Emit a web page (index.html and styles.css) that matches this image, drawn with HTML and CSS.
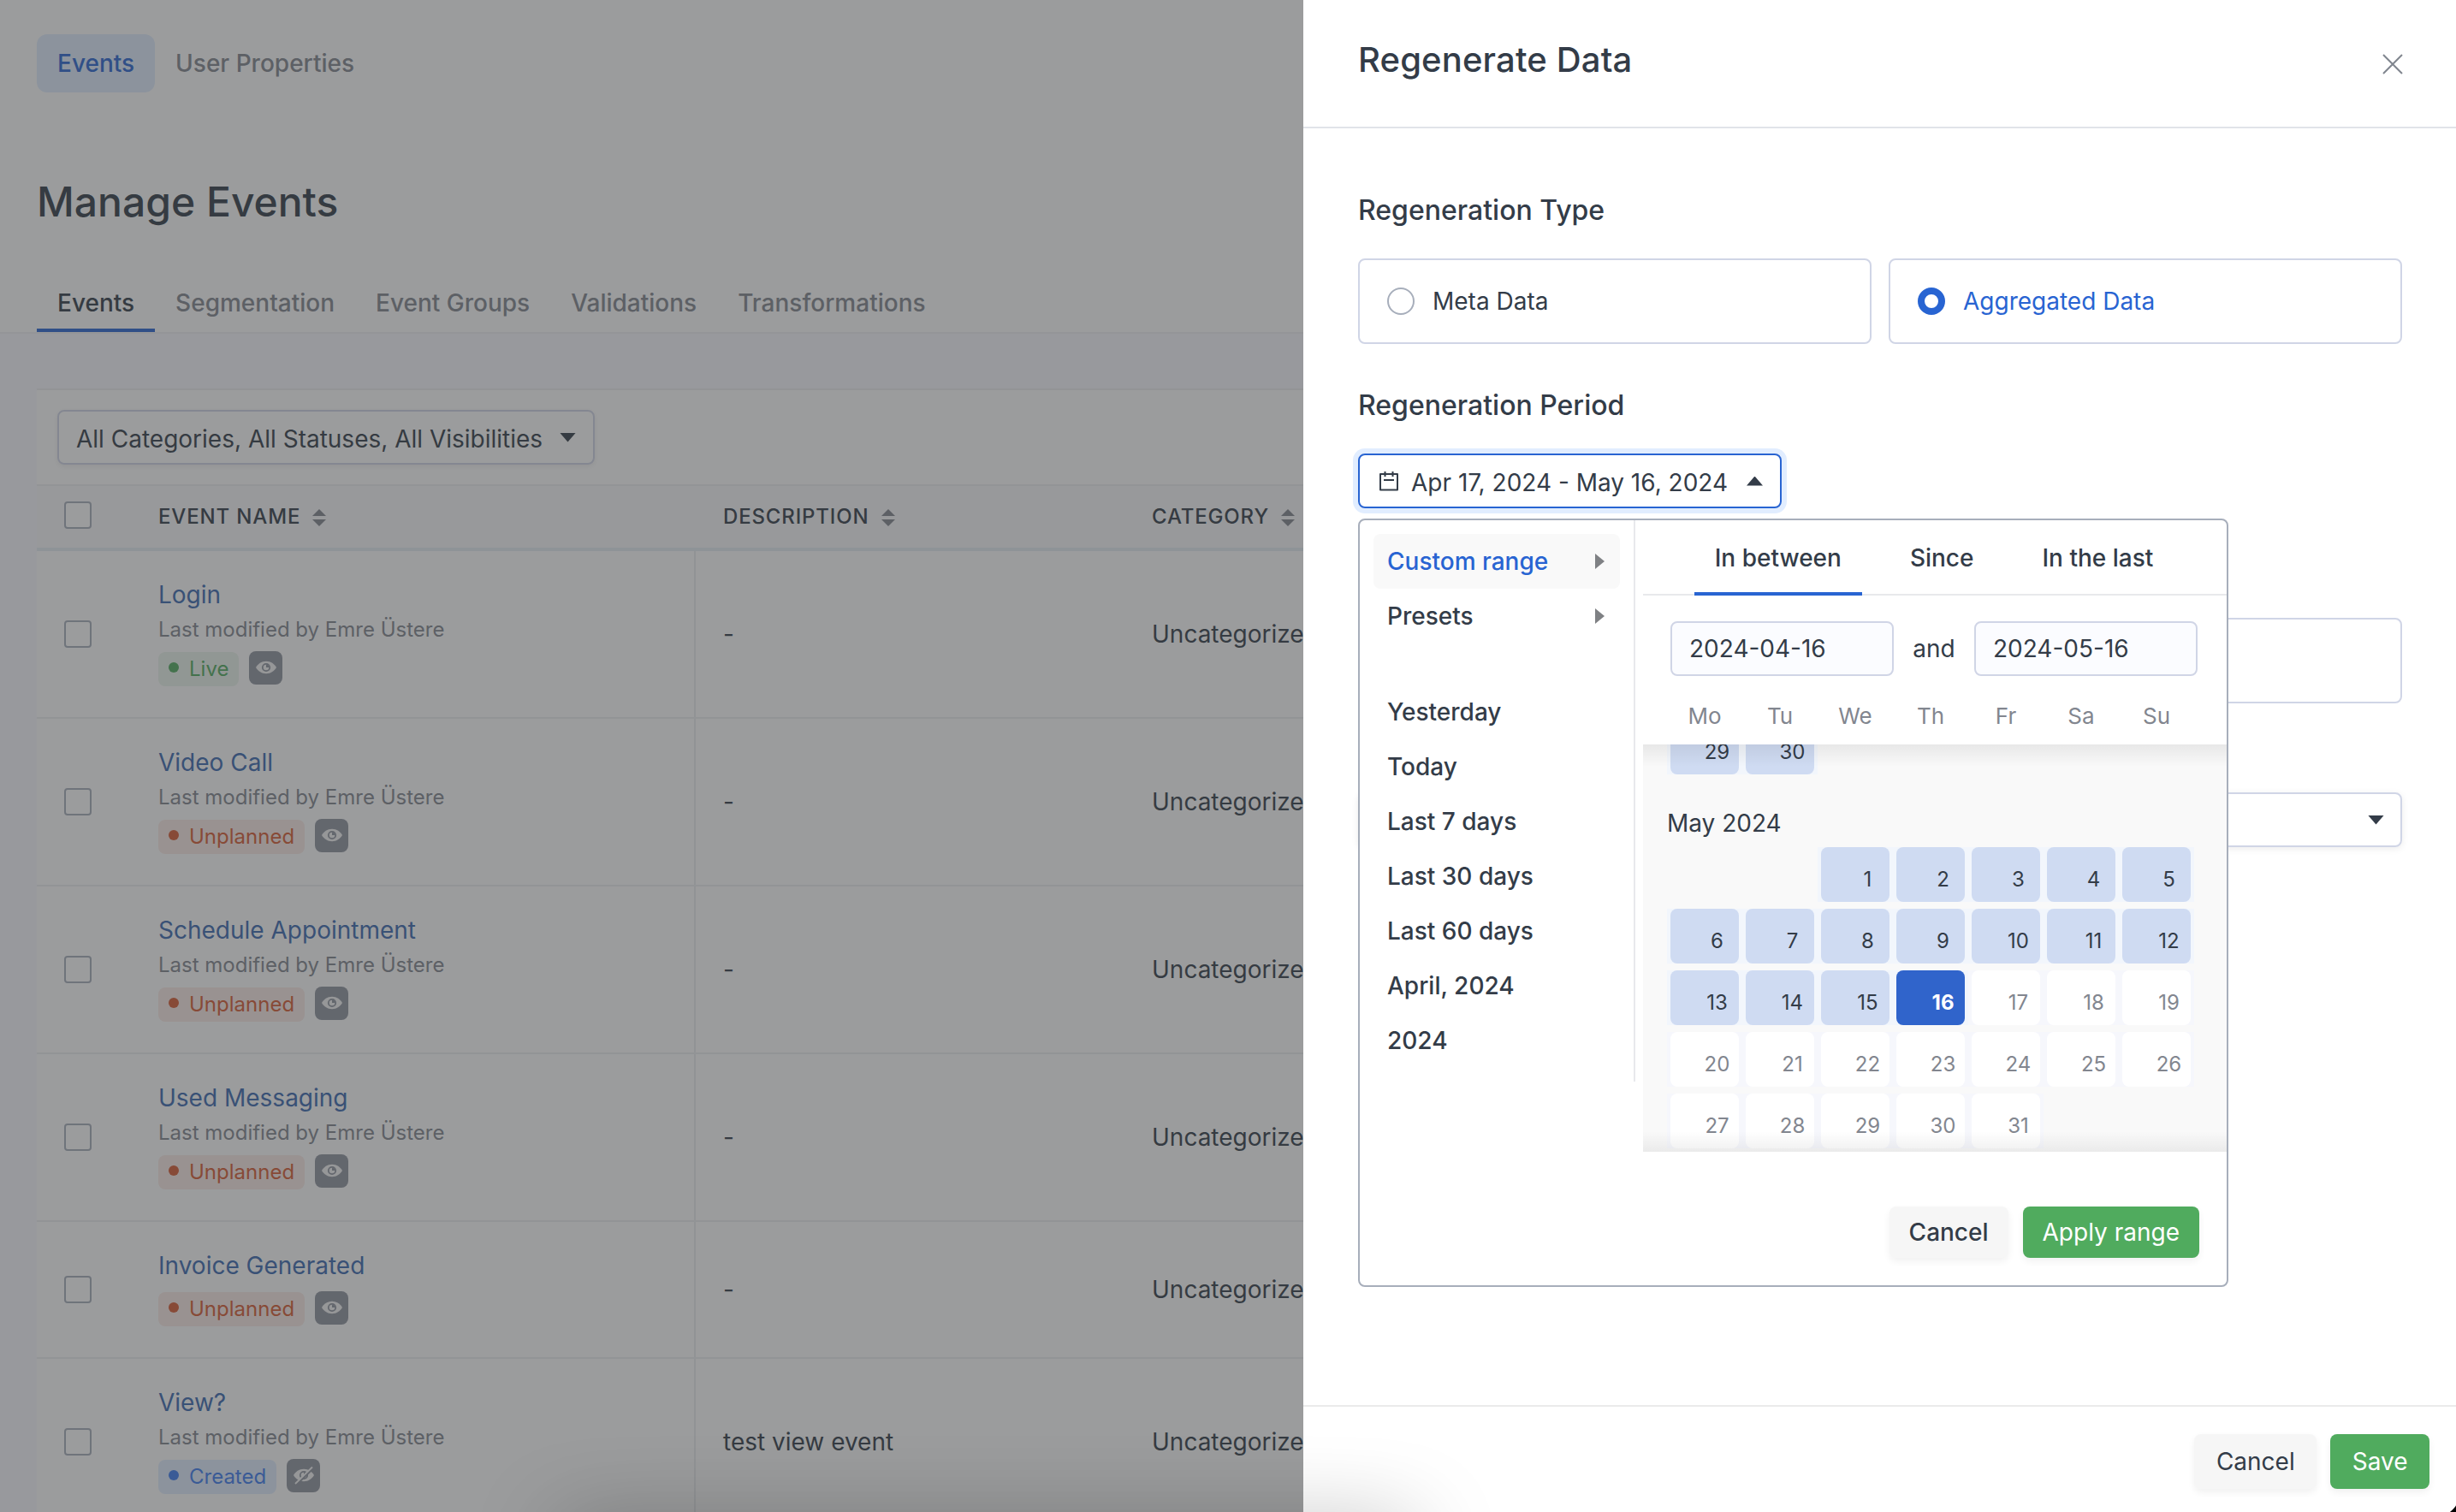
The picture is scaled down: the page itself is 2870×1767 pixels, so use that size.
FILE: index.html
```html
<!DOCTYPE html>
<html lang="en">
<head>
	<meta charset="utf-8">
	<title>Manage Events</title>
	<meta name="viewport" content="width=device-width, initial-scale=1">
	<link rel="stylesheet" href="styles.css">
</head>
<body>
	<svg class="defs" width="0" height="0">
		<symbol id="eye" viewBox="0 0 24 20">
			<path d="M12 2.800C6.500 2.800 2.200 6 0 10c2.200 4 6.500 7.200 12 7.200s9.800-3.200 12-7.200C21.800 6 17.500 2.800 12 2.800z" fill="currentColor"/>
			<circle cx="12" cy="10" r="4.200" fill="none" stroke="#8f949f" stroke-width="1.800"/>
			<path d="M12 6.500a3.500 3.500 0 0 1 3.500 3.500H12z" fill="#8f949f"/>
		</symbol>
		<symbol id="sort" viewBox="0 0 16 20">
			<path d="M8 0l8 8H0zM0 12h16l-8 8z" fill="currentColor"/>
		</symbol>
	</svg>

	<div class="page">
		<div class="top">
			<div class="pills">
				<span class="pill active">Events</span>
				<span class="pill">User Properties</span>
			</div>
			<h1>Manage Events</h1>
			<div class="tabs">
				<span class="tab active">Events</span>
				<span class="tab">Segmentation</span>
				<span class="tab">Event Groups</span>
				<span class="tab">Validations</span>
				<span class="tab">Transformations</span>
			</div>
		</div>

		<div class="card">
			<div class="filters">
				<div class="filter"><span>All Categories, All Statuses, All Visibilities</span><i class="caret"></i></div>
			</div>
			<div class="row head">
				<i class="check"></i>
				<div class="name"><span>EVENT NAME</span><svg class="sort"><use href="#sort"/></svg></div>
				<div class="desc"><span>DESCRIPTION</span><svg class="sort"><use href="#sort"/></svg></div>
				<div class="cat"><span>CATEGORY</span><svg class="sort"><use href="#sort"/></svg></div>
			</div>
			<div class="row">
				<i class="check"></i>
				<div class="name">
					<a>Login</a>
					<small>Last modified by Emre Üstere</small>
					<div class="badges"><span class="badge live">Live</span><span class="eye"><svg><use href="#eye"/></svg></span></div>
				</div>
				<div class="desc">-</div>
				<div class="cat">Uncategorized</div>
			</div>
			<div class="row">
				<i class="check"></i>
				<div class="name">
					<a>Video Call</a>
					<small>Last modified by Emre Üstere</small>
					<div class="badges"><span class="badge unplanned">Unplanned</span><span class="eye"><svg><use href="#eye"/></svg></span></div>
				</div>
				<div class="desc">-</div>
				<div class="cat">Uncategorized</div>
			</div>
			<div class="row">
				<i class="check"></i>
				<div class="name">
					<a>Schedule Appointment</a>
					<small>Last modified by Emre Üstere</small>
					<div class="badges"><span class="badge unplanned">Unplanned</span><span class="eye"><svg><use href="#eye"/></svg></span></div>
				</div>
				<div class="desc">-</div>
				<div class="cat">Uncategorized</div>
			</div>
			<div class="row">
				<i class="check"></i>
				<div class="name">
					<a>Used Messaging</a>
					<small>Last modified by Emre Üstere</small>
					<div class="badges"><span class="badge unplanned">Unplanned</span><span class="eye"><svg><use href="#eye"/></svg></span></div>
				</div>
				<div class="desc">-</div>
				<div class="cat">Uncategorized</div>
			</div>
			<div class="row">
				<i class="check"></i>
				<div class="name">
					<a>Invoice Generated</a>
					<div class="badges"><span class="badge unplanned">Unplanned</span><span class="eye"><svg><use href="#eye"/></svg></span></div>
				</div>
				<div class="desc">-</div>
				<div class="cat">Uncategorized</div>
			</div>
			<div class="row">
				<i class="check"></i>
				<div class="name">
					<a>View?</a>
					<small>Last modified by Emre Üstere</small>
					<div class="badges"><span class="badge created">Created</span><span class="eye"><svg viewBox="0 0 24 20"><use href="#eye" width="24" height="20"/><path d="M3.500 21L23 2" stroke="#8f949f" stroke-width="2.400"/><path d="M2 20L22 .5" stroke="currentColor" stroke-width="1.800"/></svg></span></div>
				</div>
				<div class="desc">test view event</div>
				<div class="cat">Uncategorized</div>
			</div>
		</div>
	</div>

	<div class="overlay"></div>

	<div class="drawer">
		<div class="drawer-head">
			<h2>Regenerate Data</h2>
			<svg class="close" viewBox="0 0 24 24"><path d="M1 1l22 22M23 1L1 23" stroke="#81868f" stroke-width="2"/></svg>
		</div>
		<div class="drawer-body">
			<h3>Regeneration Type</h3>
			<div class="radios">
				<label class="radio"><i></i>Meta Data</label>
				<label class="radio on"><i></i>Aggregated Data</label>
			</div>
			<h3>Regeneration Period</h3>
			<div class="period">
				<div class="date-btn">
					<svg class="cal" viewBox="0 0 24 24"><path d="M2 4h20v18.500H2zM7.500 1v6M16.500 1v6M6 11h12" fill="none" stroke="#333c48" stroke-width="2" stroke-linejoin="round"/></svg>
					<span>Apr 17, 2024 - May 16, 2024</span>
					<i class="caret up"></i>
				</div>
				<div class="picker">
					<div class="picker-main">
						<div class="shortcuts">
							<div class="item sel">Custom range<i class="arrow"></i></div>
							<div class="item">Presets<i class="arrow"></i></div>
							<div class="item first">Yesterday</div>
							<div class="item">Today</div>
							<div class="item">Last 7 days</div>
							<div class="item">Last 30 days</div>
							<div class="item">Last 60 days</div>
							<div class="item">April, 2024</div>
							<div class="item">2024</div>
						</div>
						<div class="range">
							<div class="range-tabs"><span class="active">In between</span><span>Since</span><span>In the last</span></div>
							<div class="inputs"><div class="input">2024-04-16</div><span>and</span><div class="input">2024-05-16</div></div>
							<div class="week"><span>Mo</span><span>Tu</span><span>We</span><span>Th</span><span>Fr</span><span>Sa</span><span>Su</span></div>
							<div class="scroll">
								<div class="days april" id="april"></div>
								<div class="month">May 2024</div>
								<div class="days" id="may"></div>
							</div>
						</div>
					</div>
					<div class="picker-foot">
						<span class="btn strong">Cancel</span>
						<span class="btn green">Apply range</span>
					</div>
				</div>
			</div>
			<div class="box"></div>
			<div class="select"><i class="caret"></i></div>
		</div>
		<div class="drawer-foot">
			<span class="btn">Cancel</span>
			<span class="btn green">Save</span>
		</div>
	</div>
	<div class="bottom-shadow"></div>
	<div class="corner"></div>

	<script>
	// offset = empty cells before the first day
	function fill(id, from, to, offset, today) {
		var box = document.getElementById(id);
		for (var d = from; d <= to; d++) {
			var cell = document.createElement("div");
			cell.className = "day";
			if (id == "april" || d < today) cell.className += " in";
			else if (d == today) cell.className += " in today";
			if (d == from) cell.style.gridColumnStart = offset + 1;
			cell.innerHTML = "<span>" + d + "</span>";
			box.appendChild(cell);
		}
	}
	fill("april", 29, 30, 0, 0);
	fill("may", 1, 31, 2, 16);
	</script>
</body>
</html>
```
FILE: styles.css
```css
*{ margin:0; padding:0; box-sizing:border-box; }
body{ width:2870px; height:1767px; overflow:hidden; position:relative; font-family:Inter,"Liberation Sans",sans-serif; font-size:28px; line-height:40px; color:#333c48; background:#fff; }
i{ font-style:normal; }
.defs{ position:absolute; }

/* page */
.page{ height:1767px; background:#f8f9ff; overflow:hidden; }
.top{ height:390px; background:#fff; border-bottom:2px solid #f0f1f4; padding:40px 0 0 43px; }
.pills{ display:flex; height:68px; }
.pill{ padding:0 24px; line-height:69px; border-radius:12px; color:#82868f; font-weight:500; }
.pill.active{ background:#e1edff; color:#2864d2; }
h1{ font-size:48px; line-height:60px; font-weight:500; margin-top:98px; }
.tabs{ display:flex; height:70px; margin-top:52px; }
.tab{ padding:0 24px; line-height:72px; height:70px; color:#82868f; font-weight:500; }
.tab.active{ color:#333c48; border-bottom:4px solid #2864d2; }

.card{ margin:64px 0 0 43px; background:#fff; border-top:2px solid #eeeff1; }
.filters{ height:110px; padding:23px 0 0 24px; }
.filter{ display:inline-flex; align-items:center; justify-content:space-between; width:628px; height:64px; padding:0 20px; border:2px solid #d0d5e6; border-radius:8px; box-shadow:0 2px 6px rgba(0,0,0,.08); }
.filter span{ white-space:nowrap; padding-top:3px; }
.caret{ width:19px; height:11px; background:#333c48; clip-path:polygon(0 0,100% 0,50% 100%); }
.caret.up{ clip-path:polygon(0 100%,100% 100%,50% 0); }

.row{ display:flex; align-items:center; border-bottom:2px solid #edeef0; }
.row.head{ height:78px; border-top:2px solid #edeef0; border-bottom:4px solid #e5edf2; background:#f9f9fa; font-size:24px; font-weight:500; letter-spacing:.85px; }
.row.head > div{ display:flex; align-items:center; gap:14px; padding-top:0; padding-bottom:0; border:0; }
.row.head .check{ margin-bottom:4px; }
.sort{ width:16px; height:20px; color:#82868f; margin-top:2px; }
.check{ flex:none; width:32px; height:32px; margin-left:32px; border:2px solid #a7aebb; border-radius:4px; background:#fff; }
.name{ flex:none; width:706px; padding:36px 0 36px 78px; border-right:2px solid #ebecee; }
.name a{ display:block; height:40px; line-height:30px; color:#3a69b0; }
.name small{ display:block; height:36px; line-height:32px; font-size:24px; color:#82868f; }
.badges{ display:flex; gap:12px; margin-top:6px; height:40px; }
.badge{ display:flex; align-items:center; gap:12px; height:40px; padding:0 12px; border-radius:8px; font-size:24px; }
.badge:before{ content:""; width:12px; height:12px; border-radius:50%; background:currentColor; margin-top:-4px; }
.live{ background:#ebf5ec; color:#50ab5e; }
.unplanned{ background:#fbebe6; color:#d75a32; }
.created{ background:#e1edff; color:#3d7cf0; }
.eye{ display:flex; align-items:center; justify-content:center; width:39px; height:39px; margin-top:-1px; padding-bottom:2px; border-radius:8px; background:#8f949f; color:#f4f4f5; }
.eye svg{ width:24px; height:20px; overflow:visible; }
.desc{ flex:none; width:500px; padding-left:32px; }
.cat{ white-space:nowrap; }

.overlay{ position:absolute; inset:0; background:rgba(55,57,59,.5); }

/* drawer */
.drawer{ position:absolute; top:0; right:0; width:1347px; height:1767px; background:#fff; display:flex; flex-direction:column; }
.drawer-head{ height:150px; padding:0 62px 0 64px; border-bottom:2px solid #e1e3e9; display:flex; justify-content:space-between; align-items:center; }
h2{ font-size:40px; font-weight:500; line-height:50px; margin-top:-8px; letter-spacing:.15px; }
.close{ width:24px; height:24px; margin-top:2px; }
.drawer-body{ flex:1; padding:76px 63px 0 64px; }
h3{ font-size:32px; font-weight:500; line-height:40px; }
.radios{ display:grid; grid-template-columns:1fr 1fr; gap:20px; margin:36px 0 52px; }
.radio{ display:flex; align-items:center; gap:21px; height:100px; padding-left:32px; border:2px solid #d0d5e6; border-radius:8px; }
.radio i{ width:32px; height:32px; border:2px solid #a7aebb; border-radius:50%; }
.radio.on{ color:#2864d2; }
.radio.on i{ border:8px solid #2864d2; }
.period{ position:relative; margin-top:36px; }
.date-btn{ display:flex; align-items:center; width:495px; height:64px; padding:0 20px 0 22px; border:2px solid #2864d2; border-radius:8px; box-shadow:0 0 0 6px #e1edff; white-space:nowrap; }
.date-btn span{ padding-top:3px; }
.date-btn .caret{ margin-left:auto; }
.cal{ width:24px; height:24px; margin-right:14px; }
.box{ height:100px; margin-top:128px; border:2px solid #d0d5e6; border-radius:8px; }
.select{ display:flex; align-items:center; justify-content:flex-end; height:64px; margin-top:104px; padding-right:19px; border:2px solid #d0d5e6; border-radius:8px; box-shadow:0 2px 8px rgba(0,0,0,.08); }
.drawer-foot{ height:125px; border-top:2px solid #ebebeb; padding:32px 31px 0 0; display:flex; justify-content:flex-end; gap:16px; }
.btn{ height:64px; line-height:64px; padding:0 25.500px; border-radius:8px; background:#f6f6f6; box-shadow:0 4px 8px rgba(0,0,0,.06); }
.btn.green{ background:#50ab5e; color:#fff; }

/* date picker, drops over the form */
.picker{ position:absolute; z-index:2; left:0; top:76px; width:1017px; height:898px; background:#fff; border:2px solid #a7aebb; border-radius:8px; }
.picker-main{ display:flex; height:738px; }
.shortcuts{ width:322px; height:656px; padding:16px 16px 0; border-right:2px solid #e8e9ec; font-weight:500; }
.item{ display:flex; align-items:center; justify-content:space-between; height:64px; padding:0 18px 0 16px; border-radius:8px; }
.item.sel{ background:#f9f9f9; color:#2864d2; }
.item.first{ margin-top:48px; }
.arrow{ width:11px; height:18px; background:#7f8184; clip-path:polygon(0 0,100% 50%,0 100%); }
.range{ flex:1; margin-left:9px; }
.range-tabs{ display:flex; justify-content:center; gap:32px; height:88px; padding-right:2px; border-bottom:2px solid #e8e9ec; font-weight:500; }
.range-tabs span{ height:88px; line-height:88px; padding:0 24px; }
.range-tabs .active{ border-bottom:4px solid #2864d2; }
.inputs{ display:flex; align-items:center; justify-content:space-between; margin:30px 34px 0 32px; }
.input{ width:261px; height:64px; line-height:60px; padding-left:20px; border:2px solid #d0d5e6; border-radius:8px; background:#fbfcff; }
.week{ display:grid; grid-template-columns:repeat(7,88px); padding-left:28px; height:80px; line-height:94px; text-align:center; font-size:26px; color:#82868f; }
.scroll{ position:relative; height:476px; padding-left:28px; background:#f9f9f9; overflow:hidden; }
.scroll:after{ content:""; position:absolute; inset:0; background:linear-gradient(rgba(0,0,0,.07),transparent 26px,transparent 452px,rgba(0,0,0,.06)); }
.days{ display:grid; grid-template-columns:repeat(7,88px); row-gap:8px; }
.april{ margin-top:-29px; }
.month{ height:85px; line-height:115px; }
.day{ height:64px; padding:0 4px; background:#f6f7fc; }
.day span{ display:block; height:64px; padding:9px 0 0 29px; line-height:57px; text-align:center; font-size:24px; color:#82868f; background:#fff; border-radius:8px; }
.day.in{ background:#f2f6fc; }
.day.in span{ background:#cfdbf2; color:#333c48; }
.day.today span{ background:#3064cb; color:#fff; font-weight:700; }
.picker-foot{ display:flex; justify-content:flex-end; gap:17px; padding:64px 32px 0 0; }
.picker-foot .btn{ height:60px; line-height:60px; padding:0 23px; }
.btn.strong{ font-weight:500; }

/* headings sit 32px further right than the cell edge */
.desc + .cat{ padding-left:33px; }

.bottom-shadow{ position:absolute; left:500px; bottom:0; width:1340px; height:130px; overflow:hidden; }
.bottom-shadow:before{ content:""; display:block; height:40px; margin:152px 185px 0 150px; border-radius:20px; box-shadow:0 0 100px 0 rgba(0,0,0,.4); }
.corner{ position:absolute; right:0; bottom:0; width:20px; height:20px; background:radial-gradient(circle at -4px -3px,transparent 28px,#000 29px); }
```
